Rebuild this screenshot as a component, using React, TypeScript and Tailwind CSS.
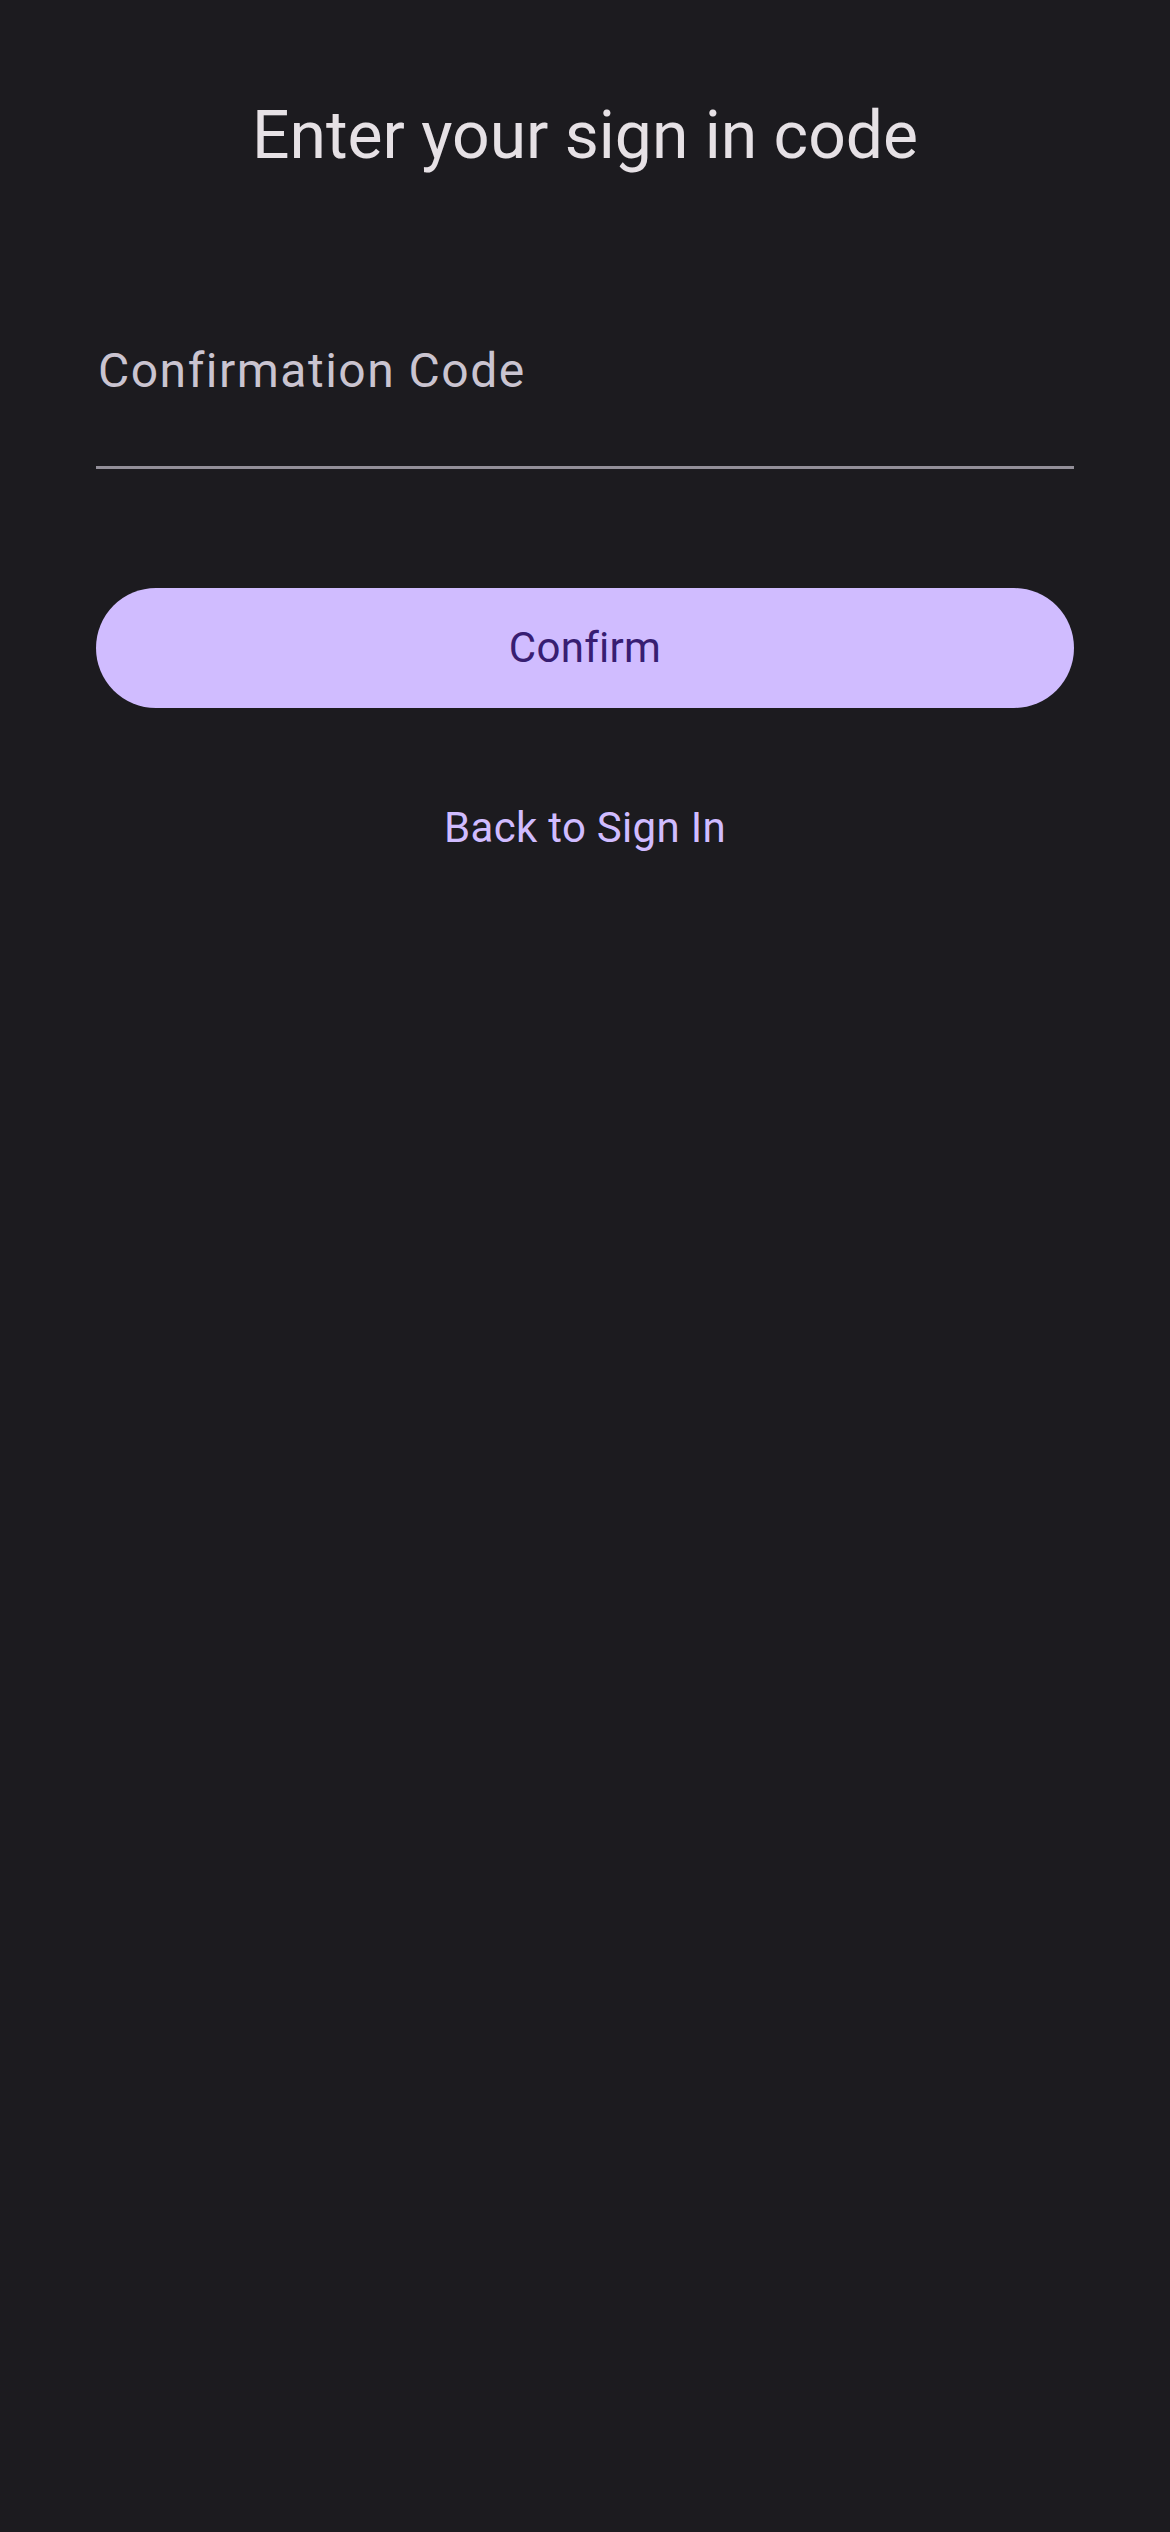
import React from 'react';

const App = () => {
  return (
    <div className="w-[1170px] h-[2532px] bg-[#1c1b1f] flex flex-col px-[96px] pt-[92px]" style={{fontFamily: 'Roboto, sans-serif'}}>
      <h1 className="text-center text-[66px] leading-[88px] text-[#e6e1e5] font-normal">
        Enter your sign in code
      </h1>

      <div className="mt-[159px] flex flex-col">
        <label className="text-[48px] leading-[64px] text-[#cac4d0] tracking-[1.5px] px-[2px]">
          Confirmation Code
        </label>
        <div className="mt-[63px] h-[3px] bg-[#938f99]" />
      </div>

      <button className="mt-[119px] h-[120px] w-full rounded-full bg-[#d0bcff] text-[#381e72] text-[42px] leading-[120px] tracking-[0.3px]">
        Confirm
      </button>

      <button className="mt-[92px] self-center text-[42px] leading-[56px] tracking-[0.3px] text-[#d0bcff]">
        Back to Sign In
      </button>
    </div>
  );
};

export default App;
